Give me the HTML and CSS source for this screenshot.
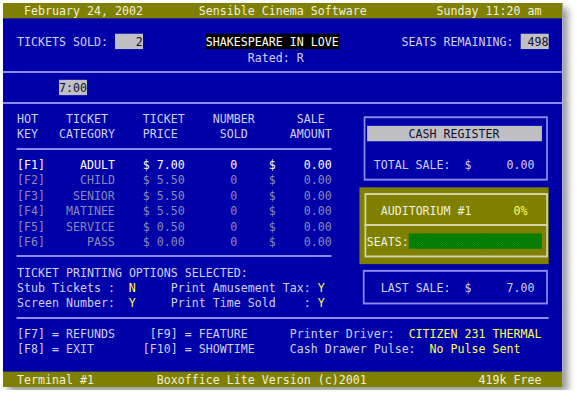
FILE: index.html
```html
<!DOCTYPE html>
<html lang="en">
<head>
    <meta charset="UTF-8">
    <title>Boxoffice Lite</title>
    <link rel="stylesheet" href="styles.css">
</head>
<body>
    <div class="monitor">
        <div class="screen">
            <div class="titlebar">
                <span class="bar-date">February 24, 2002</span>
                <span class="bar-name">Sensible Cinema Software</span>
                <span class="bar-time">Sunday 11:20 am</span>
            </div>

            <div class="header">
                <div class="counter">TICKETS SOLD: <span class="field">2</span></div>
                <div class="feature">
                    <div class="movie">SHAKESPEARE IN LOVE</div>
                    <div class="rating">Rated: R</div>
                </div>
                <div class="counter seats">SEATS REMAINING: <span class="field">498</span></div>
            </div>

            <div class="rule"></div>
            <div class="showtimes"><span class="field">7:00</span></div>
            <div class="rule"></div>

            <div class="main">
                <div class="sales">
                    <table class="prices">
                        <colgroup>
                            <col class="c-key"><col class="c-cat"><col class="c-price"><col class="c-num"><col class="c-cur"><col class="c-amt">
                        </colgroup>
                        <thead>
                            <tr>
                                <th>HOT<br>KEY</th>
                                <th class="cat">TICKET<br>CATEGORY</th>
                                <th class="price">TICKET<br>PRICE</th>
                                <th class="num">NUMBER<br>SOLD</th>
                                <th></th>
                                <th class="amt">SALE<br>AMOUNT</th>
                            </tr>
                        </thead>
                        <tbody>
                            <tr class="sep"><td colspan="6"></td></tr>
                            <tr class="on"><td>[F1]</td><td class="cat">ADULT</td><td class="price">$ 7.00</td><td class="num">0</td><td class="cur">$</td><td class="amt">0.00</td></tr>
                            <tr><td>[F2]</td><td class="cat">CHILD</td><td class="price">$ 5.50</td><td class="num">0</td><td class="cur">$</td><td class="amt">0.00</td></tr>
                            <tr><td>[F3]</td><td class="cat">SENIOR</td><td class="price">$ 5.50</td><td class="num">0</td><td class="cur">$</td><td class="amt">0.00</td></tr>
                            <tr><td>[F4]</td><td class="cat">MATINEE</td><td class="price">$ 5.50</td><td class="num">0</td><td class="cur">$</td><td class="amt">0.00</td></tr>
                            <tr><td>[F5]</td><td class="cat">SERVICE</td><td class="price">$ 0.50</td><td class="num">0</td><td class="cur">$</td><td class="amt">0.00</td></tr>
                            <tr><td>[F6]</td><td class="cat">PASS</td><td class="price">$ 0.00</td><td class="num">0</td><td class="cur">$</td><td class="amt">0.00</td></tr>
                            <tr class="sep"><td colspan="6"></td></tr>
                        </tbody>
                    </table>

                    <div class="options">
                        <div>TICKET PRINTING OPTIONS SELECTED:</div>
                        <div class="opt-grid">
                            <span>Stub Tickets</span><span>:</span><span class="flag">N</span>
                            <span>Print Amusement Tax</span><span>:</span><span class="flag">Y</span>
                            <span>Screen Number</span><span>:</span><span class="flag">Y</span>
                            <span>Print Time Sold</span><span>:</span><span class="flag">Y</span>
                        </div>
                    </div>
                </div>

                <div class="panel">
                    <div class="box cashbox">
                        <div class="cash-title">CASH REGISTER</div>
                        <div class="sale-line total"><span class="sale-label">TOTAL SALE:</span><span>$</span><span class="sale-amt">0.00</span></div>
                    </div>

                    <div class="box auditorium">
                        <div class="aud-line"><span class="aud-name">AUDITORIUM #1</span><span class="flag">0%</span></div>
                        <div class="aud-sep"></div>
                        <div class="aud-line seats-line"><span class="seats-label">SEATS:</span><span class="seat-bar"></span></div>
                    </div>

                    <div class="box lastsale">
                        <div class="sale-line last"><span class="sale-label">LAST SALE:</span><span>$</span><span class="sale-amt">7.00</span></div>
                    </div>
                </div>
            </div>

            <div class="rule short"></div>

            <div class="keys">
                <div>[F7] = REFUNDS</div><div> [F9] = FEATURE</div><div>Printer Driver:  <span class="flag">CITIZEN 231 THERMAL</span></div>
                <div>[F8] = EXIT</div><div>[F10] = SHOWTIME</div><div>Cash Drawer Pulse:  <span class="flag">No Pulse Sent</span></div>
            </div>

            <div class="blank"></div>

            <div class="statusbar">
                <span class="status-term">Terminal #1</span>
                <span class="status-ver">Boxoffice Lite Version (c)2001</span>
                <span>419k Free</span>
            </div>
        </div>
    </div>
</body>
</html>
```

FILE: styles.css
```css
body {
    margin: 0;
    background-color: #fff;
}

.monitor {
    width: 560px;
    height: 384px;
    margin: 3px;
    box-shadow: 5px 5px 7px rgba(0,0,0,0.4);
}

/* 80x25 text screen laid out on character cells, squeezed like the VGA capture */
.screen {
    width: 80ch;
    height: 400px;
    display: flex;
    flex-direction: column;
    background-color: #0000a8;
    color: #d0d0f0;
    font-family: "DejaVu Sans Mono", monospace;
    font-size: 13.7px;
    line-height: 16px;
    white-space: pre;
    transform: scale(0.8487, 0.96);
    transform-origin: 0 0;
}

.screen > div {
    flex: none;
}

.titlebar, .statusbar {
    display: flex;
    height: 16px;
    background-color: #808000;
    color: #f0f0dc;
}

.titlebar {
    padding-left: 3ch;
}

.bar-date { width: 25ch; }
.bar-name { width: 34ch; }

.statusbar {
    padding-left: 2ch;
}

.status-term { width: 20ch; }
.status-ver { width: 46ch; }

.field {
    display: inline-block;
    width: 4ch;
    text-align: right;
    background-color: #c0c0c4;
    color: #101030;
}

.header {
    display: flex;
    align-items: flex-start;
    height: 48px;
    box-sizing: border-box;
    padding: 16px 0 0 2ch;
}

.header > div {
    flex: none;
}

.feature {
    display: flex;
    flex-direction: column;
    width: 19ch;
    margin-left: 9ch;
}

.movie {
    background-color: #000;
    color: #fff;
}

.rating {
    padding-left: 6ch;
}

.seats {
    margin-left: 9ch;
}

.rule {
    height: 16px;
    background: linear-gradient(transparent 7px, #8c8cee 7px, #8c8cee 9px, transparent 9px);
}

.rule.short {
    margin: 0 2ch;
}

.showtimes {
    display: flex;
    height: 16px;
    padding-left: 8ch;
}

.main {
    display: flex;
    height: 208px;
}

.sales {
    display: flex;
    flex-direction: column;
    width: 51ch;
    padding-left: 2ch;
    box-sizing: border-box;
}

/* price table */
.prices {
    width: 45ch;
    table-layout: fixed;
    border-collapse: collapse;
    white-space: normal;
}

.c-key { width: 4ch; }
.c-cat { width: 10ch; }
.c-price { width: 10ch; }
.c-num { width: 10ch; }
.c-cur { width: 3ch; }
.c-amt { width: 8ch; }

.prices th, .prices td {
    padding: 0;
    height: 16px;
    white-space: pre;
    font-weight: normal;
    text-align: left;
    vertical-align: top;
}

.prices td {
    color: #8a8ab6;
}

.prices tr.on td {
    color: #fff;
}

.prices th.cat { padding-left: 2ch; text-align: center; }
.prices th.price { padding-left: 4ch; }
.prices th.num { padding-left: 4ch; text-align: center; }
.prices th.amt { padding-left: 2ch; text-align: center; }

.prices td.cat { text-align: right; }
.prices td.price { padding-left: 4ch; }
.prices td.num { padding-left: 4ch; text-align: center; }
.prices td.cur { padding-left: 2ch; }
.prices td.amt { text-align: right; }

.prices tr.sep td {
    background: linear-gradient(transparent 7px, #8c8cee 7px, #8c8cee 9px, transparent 9px);
}

.options {
    display: flex;
    flex-direction: column;
}

.opt-grid {
    display: grid;
    grid-template-columns: 13ch 3ch 6ch 19ch 2ch 1ch;
    grid-auto-rows: 16px;
}

.flag {
    color: #ffff55;
}

/* right hand panels */
.panel {
    display: flex;
    flex-direction: column;
    width: 27ch;
}

.box {
    position: relative;
    display: flex;
    flex-direction: column;
    flex: none;
    box-sizing: border-box;
    padding-top: 16px;
}

.box::before {
    content: "";
    position: absolute;
    top: 6px;
    bottom: 7px;
    left: 5px;
    right: 1px;
    border: 2px solid #8c8cee;
}

.cashbox {
    height: 80px;
}

.cash-title {
    width: 25ch;
    margin-left: 1ch;
    margin-bottom: 16px;
    text-align: center;
    background-color: #c0c0c4;
    color: #101030;
}

.sale-line {
    display: flex;
    padding-left: 2ch;
}

.sale-line.last {
    padding-left: 3ch;
}

.sale-label { width: 13ch; }
.last .sale-label { width: 12ch; }

.sale-amt {
    width: 9ch;
    text-align: right;
}

.auditorium {
    height: 80px;
    background-color: #808000;
    color: #f0f0dc;
}

.auditorium::before {
    left: 6px;
    border-color: #d4d4b0;
}

.aud-line {
    display: flex;
    padding-left: 3ch;
}

.aud-name {
    width: 19ch;
}

.aud-sep {
    height: 16px;
    margin: 0 1px 0 6px;
    background: linear-gradient(transparent 6px, #d4d4b0 6px, #d4d4b0 8px, transparent 8px);
}

.seats-line {
    padding-left: 1ch;
}

.seats-label {
    width: 6ch;
}

.seat-bar {
    width: 19ch;
    height: 16px;
    background: repeating-conic-gradient(#0a900a 0% 25%, #006a00 0% 50%) 0 0 / 2px 2px;
}

.lastsale {
    height: 48px;
}

.lastsale::before {
    left: 4px;
    top: 6px;
    bottom: 6px;
}

.keys {
    display: grid;
    grid-template-columns: 18ch 21ch 1fr;
    grid-auto-rows: 16px;
    height: 32px;
    padding-left: 2ch;
}

.blank {
    height: 16px;
}
```
